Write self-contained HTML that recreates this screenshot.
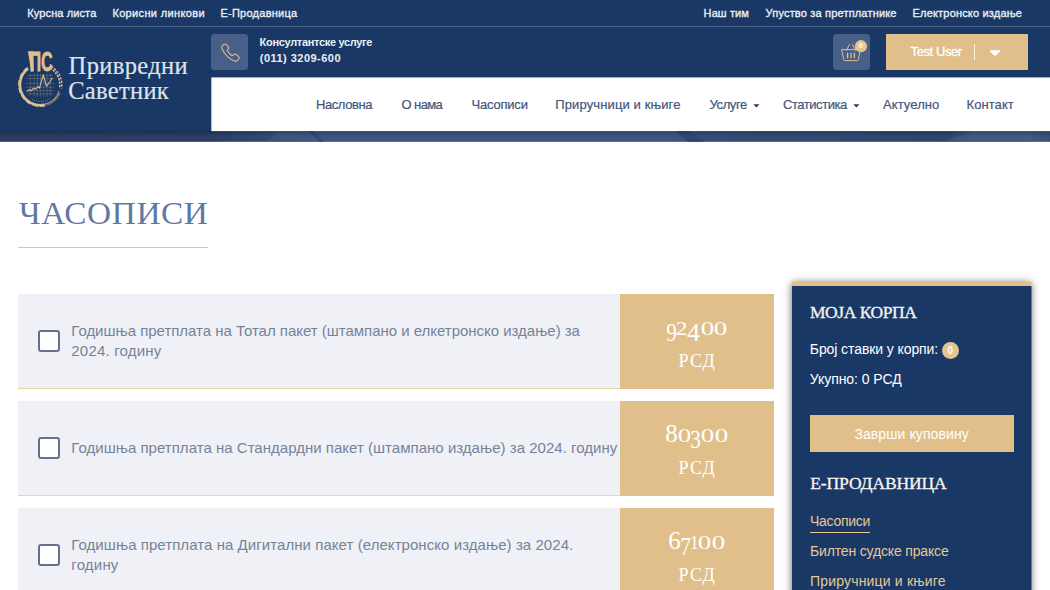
<!DOCTYPE html>
<html lang="sr">
<head>
<meta charset="utf-8">
<title>Часописи - Привредни Саветник</title>
<style>
*{box-sizing:border-box;margin:0;padding:0}
html,body{width:1050px;height:590px;overflow:hidden;background:#fff}
body{font-family:"Liberation Sans","DejaVu Sans",sans-serif;color:#193866;position:relative}
a{color:inherit;text-decoration:none}
.a{position:absolute;white-space:nowrap;display:block;line-height:1}
.sf{font-family:"Liberation Serif","DejaVu Serif",serif}
#topbar{position:absolute;left:0;top:0;width:1050px;height:27px;background:#193866;border-bottom:1px solid #4d6186}
.tl{top:7.8px;font-size:11px;color:#e9edf4;-webkit-text-stroke:0.35px #e9edf4}
#header{position:absolute;left:0;top:27px;width:1050px;height:106px;background:#193866}
#navbox{position:absolute;left:211px;top:77px;width:840px;height:54px;background:#fff;transform:translate(.35px,.4px)}
.nl{top:97.6px;font-size:13px;color:#43557c;-webkit-text-stroke:0.2px #43557c}
.ibox{position:absolute;top:34.3px;height:35.7px;background:#485f8a;border-radius:3.5px}
.pt{font-size:11px;font-weight:700;color:#eceff5}
#userbtn{position:absolute;left:886px;top:34.3px;width:142px;height:35.7px;background:#e0bf8b}
.lt{font-size:24.5px;color:#dfe3ec;-webkit-text-stroke:0.2px #dfe3ec}
#h1{left:18.5px;top:198px;font-size:31px;font-weight:400;color:#6079a3;letter-spacing:0.55px;transform:scaleX(1.075);transform-origin:0 0}
#h1line{position:absolute;left:18px;top:246.6px;width:190px;height:1.6px;background:#e3c697}
.row{position:absolute;left:18px;width:602.5px;height:95px;background:#eff1f6;border-bottom:1px solid #ead2ab}
.cb{position:absolute;left:37.9px;width:22px;height:22.1px;border:2px solid #62718f;border-radius:3px;background:#fff}
.rt{left:71.3px;font-size:15px;line-height:20px;color:#75839a}
.price{position:absolute;left:620.3px;width:153.7px;height:95px;background:#e0bf8b}
.num{position:absolute;left:0;width:153.7px;text-align:center;white-space:nowrap;color:#fff;font-family:"Liberation Serif","DejaVu Serif",serif;font-weight:400;line-height:30px;height:30px;font-size:18px}
.num span{display:inline-flex;justify-content:center;position:relative;line-height:30px}
.num i{font-style:normal;display:inline-block}
.num .x{font-size:18px}
.num .x i{transform:scaleX(1.5)}
.num .x2 i{transform:scaleX(1.3)}
.num .x1 i{transform:scaleX(1)}
.num .d i{transform:scaleX(.82)}
.num .d4 i{transform:scaleX(1)}
.num .d{font-size:26px;top:5.6px}
.num .u{font-size:25px}
.cur{color:#fff;font-size:18px;letter-spacing:1.4px}
#side{position:absolute;left:792px;top:282px;width:239px;height:330px;background:#193866;border-top:4px solid #e0bf8b}
#sidesh{position:absolute;left:792px;top:282px;width:239px;height:330px;background:#193866;box-shadow:0 1px 8px rgba(0,0,0,.62)}
.sh{font-size:17.5px;font-weight:400;color:#f4f2ef;-webkit-text-stroke:0.35px #f4f2ef}
.st{font-size:14px;color:#fff}
.sg{font-size:14px;color:#e6c897}
#buy{position:absolute;left:810px;top:414.5px;width:204.2px;height:37.6px;background:#e0bf8b}
</style>
</head>
<body>
<div id="topbar"></div>
<a class="a tl" style="left:27.3px;letter-spacing:0.11px" href="#">Курсна листа</a>
<a class="a tl" style="left:112.4px;letter-spacing:0.35px" href="#">Корисни линкови</a>
<a class="a tl" style="left:220.4px;letter-spacing:0.26px" href="#">Е-Продавница</a>
<a class="a tl" style="left:703.6px;letter-spacing:0.09px" href="#">Наш тим</a>
<a class="a tl" style="left:765.6px;letter-spacing:0.18px" href="#">Упуство за претплатнике</a>
<a class="a tl" style="left:912.6px;letter-spacing:0.18px" href="#">Електронско издање</a>

<div id="header"></div>
<div id="navbox"></div>
<div class="a sf lt" style="left:68.6px;top:53.5px;letter-spacing:0.37px">Привредни</div>
<div class="a sf lt" style="left:68.2px;top:79.2px;letter-spacing:0.31px">Саветник</div>

<div class="ibox" style="left:211.4px;width:36.8px"></div>
<div class="a pt" style="left:259.6px;top:37px;letter-spacing:-0.32px">Консултантске услуге</div>
<div class="a pt" style="left:259.8px;top:52.8px;letter-spacing:0.47px">(011) 3209-600</div>
<div class="ibox" style="left:833px;width:37.1px"></div>
<div id="userbtn"></div>
<div class="a" style="left:910.6px;top:45.2px;font-size:13px;color:#fff;letter-spacing:-0.42px;-webkit-text-stroke:0.3px #fff">Test User</div>
<div class="a" style="left:974px;top:43.7px;width:1.2px;height:16.8px;background:#fbf4e8"></div>

<a class="a nl" style="left:315.9px;letter-spacing:-0.4px" href="#">Насловна</a>
<a class="a nl" style="left:401.6px;letter-spacing:-0.62px" href="#">О нама</a>
<a class="a nl" style="left:471.6px;letter-spacing:-0.22px" href="#">Часописи</a>
<a class="a nl" style="left:555.3px;letter-spacing:0.12px" href="#">Приручници и књиге</a>
<a class="a nl" style="left:709.5px;letter-spacing:-0.38px" href="#">Услуге</a>
<a class="a nl" style="left:783px;letter-spacing:-0.45px" href="#">Статистика</a>
<a class="a nl" style="left:883px;letter-spacing:0.08px" href="#">Актуелно</a>
<a class="a nl" style="left:966.6px;letter-spacing:0.06px" href="#">Контакт</a>

<svg class="a" style="left:0;top:0" width="1050" height="145" viewBox="0 0 1050 145">
  <defs>
    <linearGradient id="sg" x1="0" x2="1" y1="0" y2="0">
      <stop offset="0" stop-color="#21345c"/><stop offset="0.2" stop-color="#22365f"/><stop offset="0.255" stop-color="#2b426e"/>
      <stop offset="0.31" stop-color="#34507c"/><stop offset="0.64" stop-color="#34507c"/><stop offset="0.67" stop-color="#2d4571"/>
      <stop offset="0.8" stop-color="#2a416d"/><stop offset="0.9" stop-color="#263c68"/><stop offset="0.93" stop-color="#39527d"/><stop offset="0.98" stop-color="#3a537e"/><stop offset="1" stop-color="#304873"/>
    </linearGradient>
    <linearGradient id="sv" x1="0" x2="0" y1="0" y2="1"><stop offset="0" stop-color="#000" stop-opacity=".18"/><stop offset="1" stop-color="#fff" stop-opacity=".02"/></linearGradient>
  </defs>
  <rect x="0" y="131.3" width="1050" height="10.5" fill="url(#sg)"/>
  <polygon points="268,141.8 278,131.3 312,131.3 322,141.8" fill="#3d557f" opacity=".5"/>
  <polygon points="308,131.3 314,131.3 324,141.8 319,141.8" fill="#2a416d" opacity=".8"/>
  <polygon points="676,131.3 690,131.3 704,141.8 688,141.8" fill="#283e6a" opacity=".9"/>
  <polygon points="940,141.8 978,131.3 1030,131.3 1030,141.8" fill="#3c557f" opacity=".6"/>
  <rect x="0" y="131.3" width="1050" height="10.5" fill="url(#sv)"/>
  <!-- dropdown carets -->
  <path d="M753.4 104.3h6l-3 3.200z" fill="#1f3c6a"/>
  <path d="M853.4 104.3h6l-3 3.200z" fill="#1f3c6a"/>
  <!-- user caret -->
  <path d="M990.6 50.3h9a0.8 0.8 0 0 1 .6 1.3l-4.3 3.8a1.2 1.2 0 0 1-1.6 0l-4.3-3.8a0.8 0.8 0 0 1 .6-1.3z" fill="#fff"/>
  <!-- phone icon -->
  <path d="M224.9 43.5c-.8-.3-1.6 0-2.3.6l-1.1 1.1c-.8.9-.9 2.1-.4 3.300c1.300 3.100 3.400 6 6 8.400 2.200 2.100 4.800 3.700 7.500 4.700 1.200.4 2.400.1 3.200-.7l1.300-1.400c.7-.8.700-1.900-.1-2.600l-2.700-2.300c-.7-.6-1.700-.6-2.400 0l-1.100 1c-.3.300-.8.300-1.200.1-1.900-1.300-3.500-2.900-4.700-4.800-.2-.4-.2-.8.100-1.100l.9-1c.6-.7.600-1.700 0-2.400l-2.100-2.500c-.2-.2-.5-.4-.9-.4z" fill="none" stroke="#e0bf8b" stroke-width="1.15" stroke-linejoin="round" transform="translate(230.300 52.5) scale(.93) translate(-230 -52.5)"/>
  <!-- basket icon -->
  <g fill="none" stroke="#e0bf8b" stroke-width="1" stroke-linecap="round" stroke-linejoin="round">
    <path d="M841.9 49.6h18.4l-1.9 10.2a1 1 0 0 1-1 .8h-12.600a1 1 0 0 1-1-.8z"/>
    <path d="M846.3 50.300l3.200-5.800M855.400 50.300l-3-5.800"/>
    <path d="M847.6 53.200v4.600M851 53.200v4.600M854.400 53.200v4.600" stroke-width="1.3"/>
  </g>
  <circle cx="861" cy="46.2" r="6.1" fill="#e5c48f"/>
  <text x="861" y="48.2" text-anchor="middle" font-family="Liberation Sans, sans-serif" font-weight="700" font-size="7" fill="#fff">0</text>
</svg>

<!-- logo -->
<svg class="a" style="left:14px;top:46px" width="54" height="64" viewBox="14 46 54 64">
<g fill="none" stroke="#e0bf8b">
<path d="M28.1 68.5A20.4 20.4 0 0 0 44.6 104.8" stroke-width="2.7"/>
<path d="M27.5 67.6A21.5 21.5 0 0 0 44.9 105.8" stroke-width="1.6" stroke-dasharray="5.2 2.4"/>
<path d="M50.1 68.0A19.4 19.4 0 0 1 59.5 88.2" stroke-width="1.6" stroke-dasharray="2.2 1.2"/>
<path d="M52.1 66.9A21.4 21.4 0 0 1 61.5 88.5" stroke-width="1.4" stroke-dasharray="2.2 1.4" stroke-dashoffset="1"/>
<path d="M59.5 92.9A20.8 20.8 0 0 1 44.7 105.1" stroke-width="2" stroke-dasharray=".55 .6" opacity=".9"/>
<path d="M59.0 90.9A19.6 19.6 0 0 1 44.5 104.0" stroke-width=".7"/>
<path d="M30.3 73.6V95.5M34.1 73.6V97.2M37.3 73.6V97.2M40.6 73.6V97.2M43.8 73.6V97.2M47.1 73.6V97.2M50.3 73.6V95.5M27 75.3H52.5M25.6 78.6H54.4M25.6 83.4H54.4M25.6 87.2H54.4M25.6 90.6H54.4M27 94H52.5" stroke-width=".55" opacity=".45"/>
<path d="M27 91.6l2.400-2.100 1.900 1.200 2.500-2.600 1.800 1.100 2.300-2.700 1.600 1.600 3.700-13.300 3.300 11.400 6-8.200" stroke-width="1.100" stroke-linejoin="round"/>
<path d="M32.0 99.3A16.8 16.8 0 0 0 50.0 98.6" stroke-width="1" stroke-dasharray=".8 1.500" opacity=".8"/>
</g>
<polygon points="27.9,51.3 33,51.3 33.9,71.2 31.2,71.2" fill="#e0bf8b"/>
<text x="29.5" y="71" font-family="Liberation Sans, sans-serif" font-weight="700" font-size="28.2" fill="#e0bf8b" stroke="#e0bf8b" stroke-width=".8" stroke-linejoin="round" textLength="23.2" lengthAdjust="spacingAndGlyphs">ПС</text>
</svg>

<h1 id="h1" class="a sf">ЧАСОПИСИ</h1>
<div id="h1line"></div>

<!-- row 1 -->
<div class="row" style="top:294px"></div>
<div class="cb" style="top:329.6px"></div>
<div class="a rt" style="top:321px;letter-spacing:-0.02px">Годишња претплата на Тотал пакет (штампано и елкетронско издање) за <br><span style="letter-spacing:0.2px">2024. годину</span></div>
<div class="price" style="top:294px"></div>
<div class="num" style="left:620.3px;top:312.3px"><span class="d" style="width:10.2px"><i>9</i></span><span class="x x2" style="width:10.2px"><i>2</i></span><span class="d d4" style="width:13.2px"><i>4</i></span><span class="x" style="width:13.8px"><i>0</i></span><span class="x" style="width:13.8px"><i>0</i></span></div>
<div class="a sf cur" style="left:678.4px;top:351.900px">РСД</div>

<!-- row 2 -->
<div class="row" style="top:401px"></div>
<div class="cb" style="top:436.6px"></div>
<div class="a rt" style="top:438.1px;letter-spacing:0.02px">Годишња претплата на Стандардни пакет (штампано издање) за 2024. годину</div>
<div class="price" style="top:401px"></div>
<div class="num" style="left:620.3px;top:419.3px"><span class="u" style="width:11.4px"><i>8</i></span><span class="x" style="width:13.6px"><i>0</i></span><span class="d" style="width:10px"><i>3</i></span><span class="x" style="width:13.8px"><i>0</i></span><span class="x" style="width:13.8px"><i>0</i></span></div>
<div class="a sf cur" style="left:678.4px;top:458.900px">РСД</div>

<!-- row 3 -->
<div class="row" style="top:508px"></div>
<div class="cb" style="top:543.6px"></div>
<div class="a rt" style="top:535px;letter-spacing:0.06px">Годишња претплата на Дигитални пакет (електронско издање) за 2024. <br><span style="letter-spacing:0.2px">годину</span></div>
<div class="price" style="top:508px"></div>
<div class="num" style="left:620.3px;top:526.3px"><span class="u" style="width:10.8px"><i>6</i></span><span class="d" style="width:10.8px"><i>7</i></span><span class="x x1" style="width:7px"><i>1</i></span><span class="x" style="width:13.8px"><i>0</i></span><span class="x" style="width:13.8px"><i>0</i></span></div>
<div class="a sf cur" style="left:678.4px;top:565.900px">РСД</div>

<!-- sidebar -->
<div id="sidesh"></div>
<div id="side"></div>
<div class="a" style="left:1031px;top:282px;width:1px;height:4px;background:rgba(224,191,139,.5)"></div><div class="a" style="left:1031px;top:286px;width:1px;height:310px;background:rgba(25,56,102,.5)"></div>
<div class="a sf sh" style="left:810px;top:303.6px;letter-spacing:-0.45px">МОЈА КОРПА</div>
<div class="a st" style="left:809.8px;top:341.650px;letter-spacing:-0.09px">Број ставки у корпи:</div>
<div class="a" style="left:941.8px;top:341.500px;width:17px;height:17px;border-radius:50%;background:#e5c48f;color:#fff;font-size:10px;font-weight:700;line-height:17px;text-align:center">0</div>
<div class="a st" style="left:809.8px;top:372.050px;letter-spacing:-0.06px">Укупно: 0 РСД</div>
<a id="buy" href="#"></a>
<a class="a st" style="left:854.4px;top:426.850px;letter-spacing:0.09px" href="#">Заврши куповину</a>
<div class="a sf sh" style="left:810.2px;top:474.900px;letter-spacing:-0.1px">Е-ПРОДАВНИЦА</div>
<a class="a sg" style="left:810px;top:513.750px;letter-spacing:-0.27px" href="#">Часописи</a>
<div class="a" style="left:810px;top:531.500px;width:60px;height:1.8px;background:#e6c897"></div>
<a class="a sg" style="left:810px;top:543.750px;letter-spacing:-0.16px" href="#">Билтен судске праксе</a>
<a class="a sg" style="left:810px;top:574px;letter-spacing:0.18px" href="#">Приручници и књиге</a>
</body>
</html>
